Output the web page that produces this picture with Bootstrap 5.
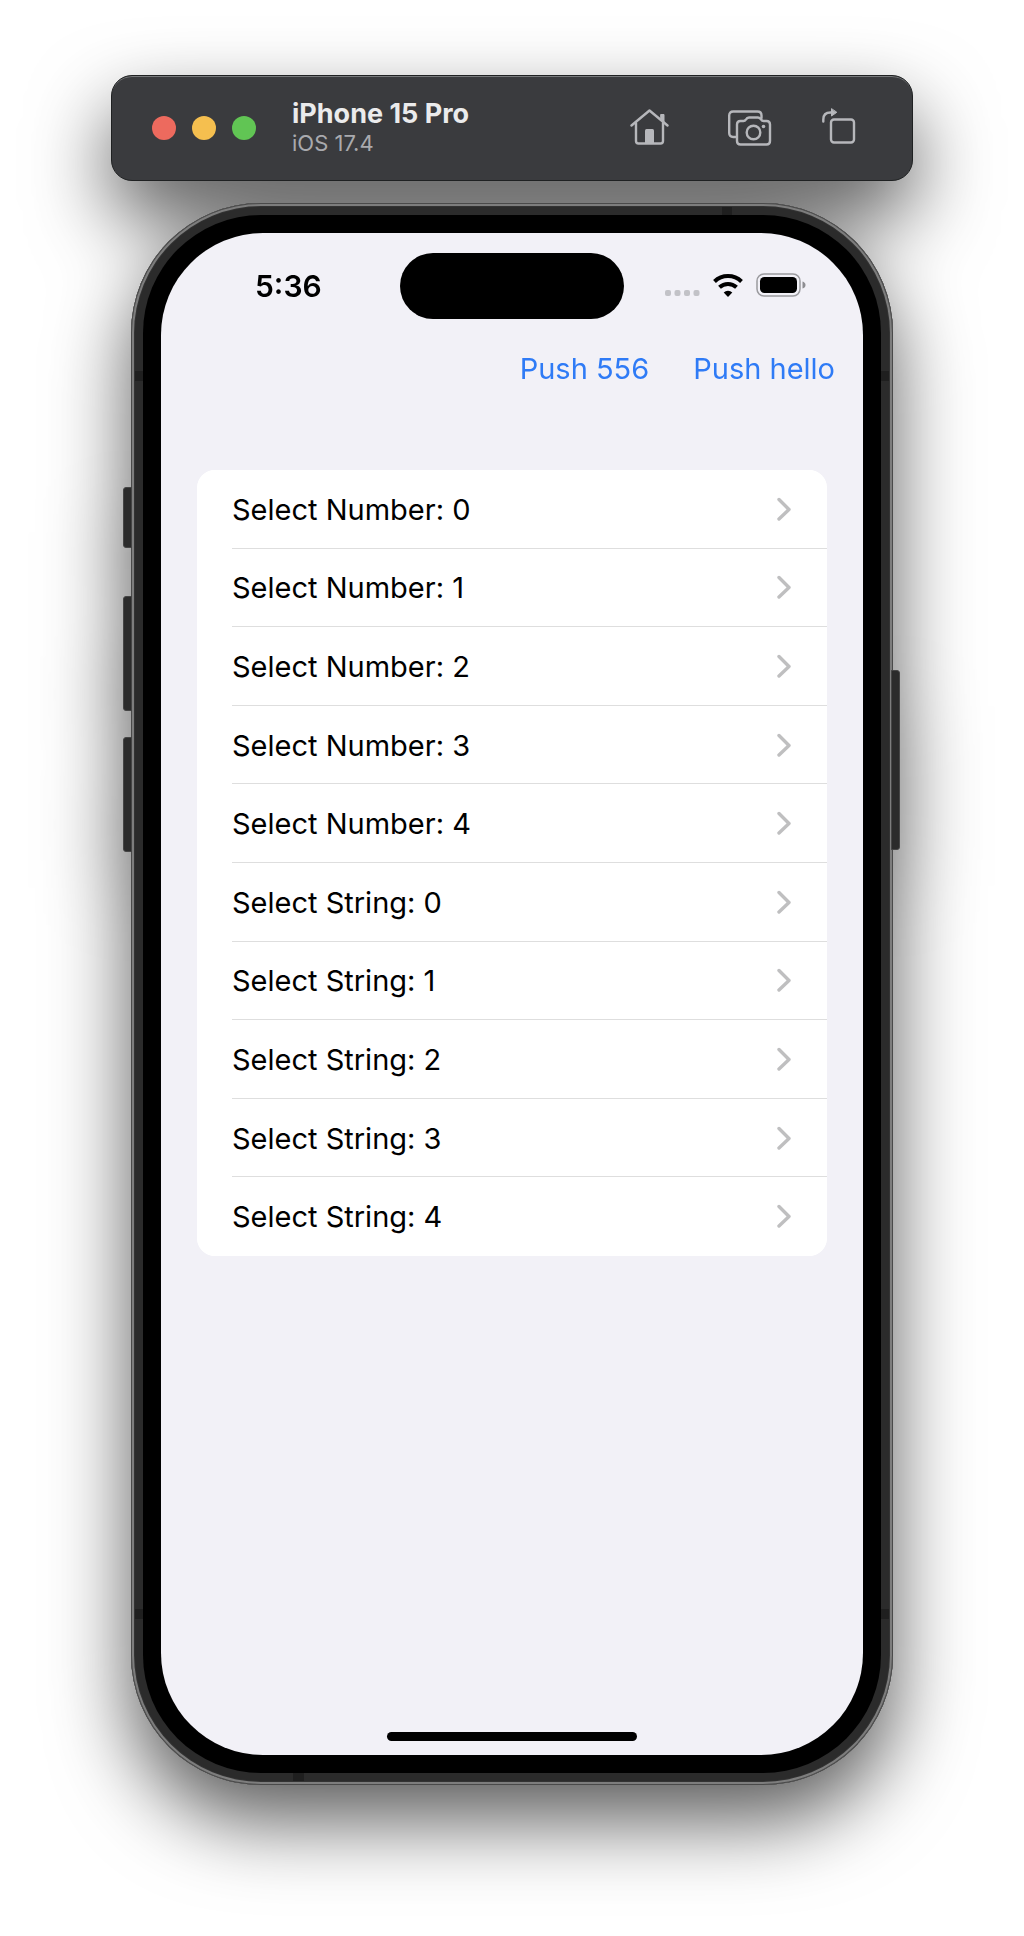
<!DOCTYPE html>
<html lang="en">
<head>
<meta charset="utf-8">
<meta name="viewport" content="width=device-width, initial-scale=1">
<title>iPhone 15 Pro – iOS 17.4</title>
<link href="https://cdn.jsdelivr.net/npm/bootstrap@5.3.0/dist/css/bootstrap.min.css" rel="stylesheet">
<style>
  body { font-family: Inter, "Liberation Sans", sans-serif; background: #fff; color: #000; }
  .simulator { max-width: 834px; padding: 75px 16px 150px; filter: drop-shadow(0 36px 40px rgba(0,0,0,.64)); }

  /* window bar */
  .sim-bar { background: #3a3b3e; border: 1px solid #1f2122; border-radius: 21px; min-height: 106px; padding: 0 46px 0 40px; box-shadow: inset 0 2px 0 -1px #77797b; }
  .dot { width: 24px; height: 24px; border-radius: 50%; border: 0; padding: 0; }
  .dot-red { background: #ed6a5e; } .dot-yellow { background: #f5bf4f; } .dot-green { background: #61c554; }
  .sim-name { padding-left: 36px; }
  .sim-title { font-size: 27px; line-height: 30px; font-weight: 700; color: #ebebec; }
  .sim-os { font-size: 22px; line-height: 28px; color: #a9aaae; }
  .tools { gap: 50px; padding-bottom: 5px; }
  .tool { border: 0; padding: 0; background: none; color: #b6b7bb; line-height: 0; }
  .tool svg { stroke-width: 2.4; }

  /* device */
  .device { margin: 22px 20px 0; padding: 12px; border-radius: 130px; background: #2b2b2b; box-shadow: inset 0 0 0 1px #4a4a4a, inset 0 0 0 3px #7d7d7d, inset 0 0 0 4px #333; }
  .bezel { background: #000; border-radius: 118px; padding: 18px; }
  .screen { background: #f2f1f7; border-radius: 102px; aspect-ratio: 702 / 1522; overflow: hidden; padding-bottom: 14px; }
  .side-key { position: absolute; width: 9px; background: #2b2b2b; border: 1px solid #454545; border-radius: 3px 0 0 3px; left: -8px; }
  .side-key.power { left: auto; right: -7px; border-radius: 0 3px 3px 0; top: 467px; height: 180px; }
  .key-action { top: 284px; height: 61px; } .key-up { top: 393px; height: 115px; } .key-down { top: 534px; height: 115px; }
  .antenna { position: absolute; background: #1f1f1f; width: 8px; height: 10px; }
  .a-left { left: 4px; } .a-right { right: 4px; } .a-high { top: 168px; } .a-low { bottom: 166px; }
  .a-top { top: 4px; right: 161px; width: 10px; height: 8px; } .a-bottom { bottom: 4px; left: 162px; width: 11px; height: 8px; }

  /* status bar */
  .status { padding: 20px 56px 0; }
  .status-side { flex: 1 1 60px; }
  .clock { font-size: 30px; line-height: 36px; font-weight: 600; padding-left: 38px; }
  .island { width: 224px; height: 66px; border-radius: 33px; background: #000; }

  .actions { gap: 44px; padding: 30px 28px 0; }
  .push { border: 0; background: none; padding: 0; font-size: 29px; line-height: 40px; color: #2f7bf6; }

  .choices { margin: 81px 36px 0; min-height: 786px; border-radius: 18px; overflow: hidden; background: #fff; --bs-list-group-bg: #fff; --bs-list-group-color: #000; }
  .choices .choice { flex: 1 1 0; border: 0; padding: 0 0 0 35px; }
  .choice-inner { border-bottom: 1px solid #dedede; font-size: 29px; line-height: 40px; padding: 2px 35px 0 0; }
  .choice-inner svg { margin-bottom: 2px; fill: none; stroke: #bfbfc0; stroke-width: 3.4; stroke-linecap: round; stroke-linejoin: round; }
  .choice:last-child .choice-inner { border-bottom-color: transparent; }
  .home-line { width: 250px; height: 9px; border-radius: 5px; background: #000; }
</style>
</head>
<body>
<main class="simulator mx-auto">
  <header class="sim-bar d-flex align-items-center">
    <div class="d-flex gap-3">
      <button class="dot dot-red" aria-label="Close"></button>
      <button class="dot dot-yellow" aria-label="Minimize"></button>
      <button class="dot dot-green" aria-label="Zoom"></button>
    </div>
    <div class="sim-name flex-grow-1">
      <div class="sim-title text-nowrap">iPhone 15 Pro</div>
      <div class="sim-os">iOS 17.4</div>
    </div>
    <div class="tools d-flex align-items-center">
      <button class="tool me-1" aria-label="Home">
        <svg width="44" height="40" viewBox="0 0 44 40" fill="none" stroke="currentColor" stroke-linecap="round" stroke-linejoin="round"><path d="M1.500 19.500 19.500 4.500 37.500 19.500"/><path d="M6 17v18q0 2.500 2.500 2.500h22q2.500 0 2.500-2.500V17"/><path d="M31 8.500h3v7.500l-3-2.500z" fill="currentColor" stroke-width="1"/><path d="M15 37V24.500q0-1.500 1.500-1.500h6q1.500 0 1.500 1.500V37z" fill="currentColor" stroke="none"/></svg>
      </button>
      <button class="tool" aria-label="Screenshot">
        <svg width="44" height="40" viewBox="0 0 44 40" fill="none" stroke="currentColor" stroke-linecap="round" stroke-linejoin="round"><path d="M7.500 31H5.200q-4 0-4-4V9.500q0-4 4-4h24.300q4 0 4 4V12"/><path d="M9 18.500q0-3.500 3.500-3.500h3q1.500 0 2.300-1.300 1.200-2.200 3.200-2.200h9q2 0 3.200 2.200.8 1.300 2.300 1.300H38.500q3.500 0 3.500 3.500V35q0 3.500-3.500 3.500h-26Q9 38.500 9 35z"/><circle cx="25.500" cy="26.500" r="6.800"/><circle cx="35.500" cy="20.500" r="1.800" fill="currentColor" stroke="none"/></svg>
      </button>
      <button class="tool" aria-label="Rotate">
        <svg width="44" height="40" viewBox="0 0 44 40" fill="none" stroke="currentColor" stroke-linecap="round" stroke-linejoin="round"><rect x="9" y="13.500" width="23" height="23" rx="3"/><path d="M1.300 15.500V13.500q0-7 7.200-7H10"/><path d="M9.500 3v7l5-3.500z" fill="currentColor" stroke-width="1"/></svg>
      </button>
    </div>
  </header>

  <section class="device position-relative">
    <span class="side-key key-action"></span><span class="side-key key-up"></span><span class="side-key key-down"></span><span class="side-key power"></span>
    <span class="antenna a-left a-high"></span><span class="antenna a-right a-high"></span><span class="antenna a-left a-low"></span><span class="antenna a-right a-low"></span><span class="antenna a-top"></span><span class="antenna a-bottom"></span>
    <div class="bezel">
      <div class="screen d-flex flex-column">
        <div class="status d-flex align-items-center">
          <div class="status-side"><div class="clock">5:36</div></div>
          <div class="island flex-shrink-0"></div>
          <div class="status-side d-flex justify-content-end align-items-center">
            <svg width="143" height="32" viewBox="0 0 143 32" fill="none" aria-label="Wi-Fi connected, battery full" role="img">
              <g fill="#c2c2c7"><rect x="1" y="20" width="6" height="6" rx="2"/><rect x="10.500" y="20" width="6" height="6" rx="2"/><rect x="20" y="20" width="6" height="6" rx="2"/><rect x="29.500" y="20" width="6" height="6" rx="2"/></g>
              <g stroke="#000" stroke-width="4"><path d="M50.500 11.500a19.500 19.500 0 0 1 27 0"/><path d="M55.500 17.300a12.500 12.500 0 0 1 17 0"/></g>
              <path d="M64 27l-4.300-4.500a6 6 0 0 1 8.600 0z" fill="#000"/>
              <rect x="93" y="4" width="43" height="22" rx="7" stroke="#9b9b9f" stroke-width="1.500"/>
              <rect x="96" y="7" width="37" height="16" rx="4.500" fill="#000"/>
              <path d="M138.500 11.500q3 1 3 3.500t-3 3.500z" fill="#8d8d91"/>
            </svg>
          </div>
        </div>

        <nav class="actions d-flex justify-content-end">
          <button class="push">Push 556</button>
          <button class="push">Push hello</button>
        </nav>

        <div class="choices list-group">
          <a href="#" class="choice list-group-item d-flex"><span class="choice-inner d-flex flex-fill align-items-center justify-content-between">Select Number: 0<svg width="16" height="24" viewBox="0 0 16 24"><path d="M3 2.500 13 12.500 3 22"/></svg></span></a>
          <a href="#" class="choice list-group-item d-flex"><span class="choice-inner d-flex flex-fill align-items-center justify-content-between">Select Number: 1<svg width="16" height="24" viewBox="0 0 16 24"><path d="M3 2.500 13 12.500 3 22"/></svg></span></a>
          <a href="#" class="choice list-group-item d-flex"><span class="choice-inner d-flex flex-fill align-items-center justify-content-between">Select Number: 2<svg width="16" height="24" viewBox="0 0 16 24"><path d="M3 2.500 13 12.500 3 22"/></svg></span></a>
          <a href="#" class="choice list-group-item d-flex"><span class="choice-inner d-flex flex-fill align-items-center justify-content-between">Select Number: 3<svg width="16" height="24" viewBox="0 0 16 24"><path d="M3 2.500 13 12.500 3 22"/></svg></span></a>
          <a href="#" class="choice list-group-item d-flex"><span class="choice-inner d-flex flex-fill align-items-center justify-content-between">Select Number: 4<svg width="16" height="24" viewBox="0 0 16 24"><path d="M3 2.500 13 12.500 3 22"/></svg></span></a>
          <a href="#" class="choice list-group-item d-flex"><span class="choice-inner d-flex flex-fill align-items-center justify-content-between">Select String: 0<svg width="16" height="24" viewBox="0 0 16 24"><path d="M3 2.500 13 12.500 3 22"/></svg></span></a>
          <a href="#" class="choice list-group-item d-flex"><span class="choice-inner d-flex flex-fill align-items-center justify-content-between">Select String: 1<svg width="16" height="24" viewBox="0 0 16 24"><path d="M3 2.500 13 12.500 3 22"/></svg></span></a>
          <a href="#" class="choice list-group-item d-flex"><span class="choice-inner d-flex flex-fill align-items-center justify-content-between">Select String: 2<svg width="16" height="24" viewBox="0 0 16 24"><path d="M3 2.500 13 12.500 3 22"/></svg></span></a>
          <a href="#" class="choice list-group-item d-flex"><span class="choice-inner d-flex flex-fill align-items-center justify-content-between">Select String: 3<svg width="16" height="24" viewBox="0 0 16 24"><path d="M3 2.500 13 12.500 3 22"/></svg></span></a>
          <a href="#" class="choice list-group-item d-flex"><span class="choice-inner d-flex flex-fill align-items-center justify-content-between">Select String: 4<svg width="16" height="24" viewBox="0 0 16 24"><path d="M3 2.500 13 12.500 3 22"/></svg></span></a>
        </div>

        <div class="home-line mt-auto mx-auto"></div>
      </div>
    </div>
  </section>
</main>
<script src="https://cdn.jsdelivr.net/npm/bootstrap@5.3.0/dist/js/bootstrap.bundle.min.js"></script>
</body>
</html>
